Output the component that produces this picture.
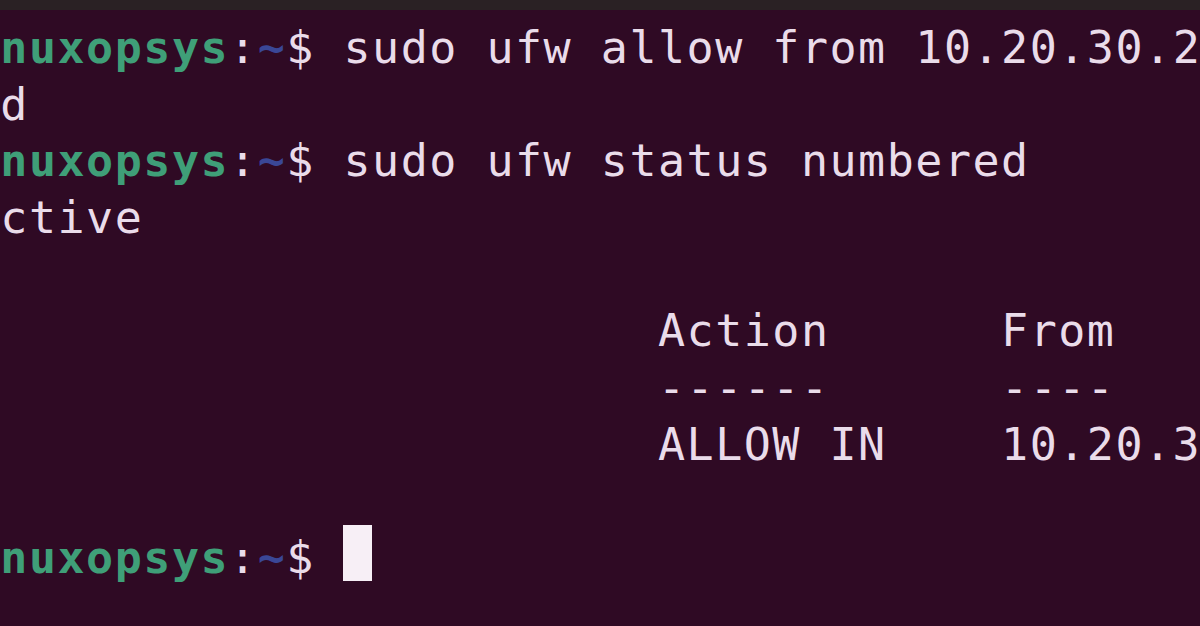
export default function App() {
  const prompt = (
    <>
      <span className="font-bold text-[#3f9f78]">ubuntu@linuxopsys</span>
      <span className="text-[#eadcea]">:</span>
      <span className="font-bold text-[#3a4796]">~</span>
      <span className="text-[#eadcea]">$ </span>
    </>
  );

  return (
    <div className="h-[626px] w-full overflow-hidden bg-[#2f0a24]">
      {/* window edge */}
      <div className="h-[10px] bg-[#2a2124]" />

      {/* terminal text, cropped on the left */}
      <div
        className="ml-[-257px] pt-[10px] whitespace-pre text-[45px] leading-[56.67px] tracking-[1.5px] text-[#eadcea]"
        style={{ fontFamily: '"DejaVu Sans Mono", "Liberation Mono", monospace' }}
      >
        <div>
          {prompt}sudo ufw allow from 10.20.30.2 to any port 22
        </div>
        <div>Rule added</div>
        <div>
          {prompt}sudo ufw status numbered
        </div>
        <div>Status: active</div>
        <div>&nbsp;</div>
        <div>{"     To                         Action      From"}</div>
        <div>{"     --                         ------      ----"}</div>
        <div>{"[ 1] 22                         ALLOW IN    10.20.30.2"}</div>
        <div>&nbsp;</div>
        <div>
          {prompt}
          <span className="inline-block h-[56px] w-[29px] -translate-y-[5px] bg-[#f7eff6] align-top" />
        </div>
      </div>
    </div>
  );
}
